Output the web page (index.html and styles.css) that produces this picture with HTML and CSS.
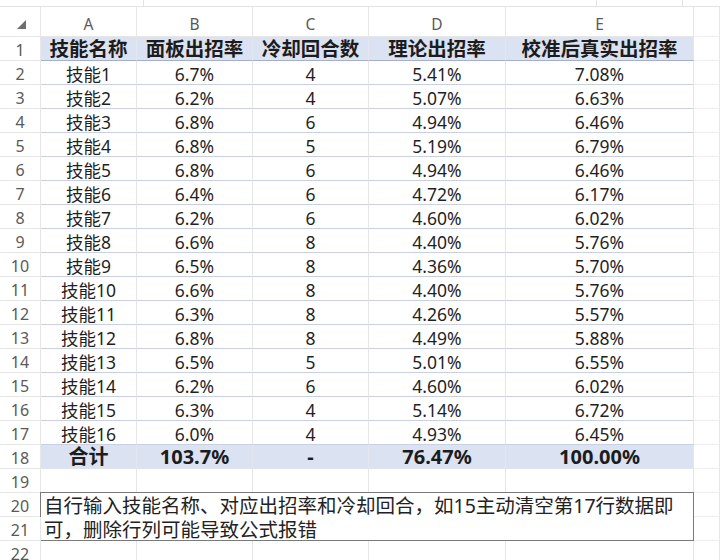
FILE: index.html
```html
<!DOCTYPE html>
<html lang="zh">
<head>
<meta charset="utf-8">
<link rel="stylesheet" href="styles.css">
</head>
<body>
<div class="topbar"><div class="tb1"></div><div class="tb2"></div><div class="tb3"></div><div class="tb4"></div></div>
<div class="sheet">
  <div class="ch corner"><span class="tri"></span></div><div class="ch">A</div><div class="ch">B</div><div class="ch">C</div><div class="ch">D</div><div class="ch">E</div><div class="ch f"></div>

  <div class="rn">1</div><div class="c hdr">技能名称</div><div class="c hdr">面板出招率</div><div class="c hdr">冷却回合数</div><div class="c hdr">理论出招率</div><div class="c hdr">校准后真实出招率</div><div class="c f"></div>
  <div class="rn">2</div><div class="c d">技能1</div><div class="c d">6.7%</div><div class="c d">4</div><div class="c d">5.41%</div><div class="c d">7.08%</div><div class="c f"></div>
  <div class="rn">3</div><div class="c d">技能2</div><div class="c d">6.2%</div><div class="c d">4</div><div class="c d">5.07%</div><div class="c d">6.63%</div><div class="c f"></div>
  <div class="rn">4</div><div class="c d">技能3</div><div class="c d">6.8%</div><div class="c d">6</div><div class="c d">4.94%</div><div class="c d">6.46%</div><div class="c f"></div>
  <div class="rn">5</div><div class="c d">技能4</div><div class="c d">6.8%</div><div class="c d">5</div><div class="c d">5.19%</div><div class="c d">6.79%</div><div class="c f"></div>
  <div class="rn">6</div><div class="c d">技能5</div><div class="c d">6.8%</div><div class="c d">6</div><div class="c d">4.94%</div><div class="c d">6.46%</div><div class="c f"></div>
  <div class="rn">7</div><div class="c d">技能6</div><div class="c d">6.4%</div><div class="c d">6</div><div class="c d">4.72%</div><div class="c d">6.17%</div><div class="c f"></div>
  <div class="rn">8</div><div class="c d">技能7</div><div class="c d">6.2%</div><div class="c d">6</div><div class="c d">4.60%</div><div class="c d">6.02%</div><div class="c f"></div>
  <div class="rn">9</div><div class="c d">技能8</div><div class="c d">6.6%</div><div class="c d">8</div><div class="c d">4.40%</div><div class="c d">5.76%</div><div class="c f"></div>
  <div class="rn">10</div><div class="c d">技能9</div><div class="c d">6.5%</div><div class="c d">8</div><div class="c d">4.36%</div><div class="c d">5.70%</div><div class="c f"></div>
  <div class="rn">11</div><div class="c d">技能10</div><div class="c d">6.6%</div><div class="c d">8</div><div class="c d">4.40%</div><div class="c d">5.76%</div><div class="c f"></div>
  <div class="rn">12</div><div class="c d">技能11</div><div class="c d">6.3%</div><div class="c d">8</div><div class="c d">4.26%</div><div class="c d">5.57%</div><div class="c f"></div>
  <div class="rn">13</div><div class="c d">技能12</div><div class="c d">6.8%</div><div class="c d">8</div><div class="c d">4.49%</div><div class="c d">5.88%</div><div class="c f"></div>
  <div class="rn">14</div><div class="c d">技能13</div><div class="c d">6.5%</div><div class="c d">5</div><div class="c d">5.01%</div><div class="c d">6.55%</div><div class="c f"></div>
  <div class="rn">15</div><div class="c d">技能14</div><div class="c d">6.2%</div><div class="c d">6</div><div class="c d">4.60%</div><div class="c d">6.02%</div><div class="c f"></div>
  <div class="rn">16</div><div class="c d">技能15</div><div class="c d">6.3%</div><div class="c d">4</div><div class="c d">5.14%</div><div class="c d">6.72%</div><div class="c f"></div>
  <div class="rn">17</div><div class="c d">技能16</div><div class="c d">6.0%</div><div class="c d">4</div><div class="c d">4.93%</div><div class="c d">6.45%</div><div class="c f"></div>
  <div class="rn">18</div><div class="c tot">合计</div><div class="c tot">103.7%</div><div class="c tot">-</div><div class="c tot">76.47%</div><div class="c tot">100.00%</div><div class="c f"></div>
  <div class="rn">19</div><div class="c"></div><div class="c"></div><div class="c"></div><div class="c"></div><div class="c"></div><div class="c f"></div>
  <div class="rn">20</div><div class="note">自行输入技能名称、对应出招率和冷却回合，如15主动清空第17行数据即可，删除行列可能导致公式报错</div><div class="c f"></div>
  <div class="rn">21</div><div class="c f"></div>
  <div class="rn">22</div><div class="c"></div><div class="c"></div><div class="c"></div><div class="c"></div><div class="c"></div><div class="c f"></div>
</div>
</body>
</html>
```
FILE: styles.css
```css
html, body {
  margin: 0;
  padding: 0;
  background: #fff;
  overflow: hidden;
  width: 720px;
  height: 560px;
}
body {
  font-family: "Noto Sans", "Noto Sans CJK SC", sans-serif;
  color: #1f1f1f;
}
.topbar {
  display: flex;
  height: 6px;
  border-bottom: 1px solid #e3e3e3;
}
.tb1 { width: 143px; border-right: 1px solid #e3e3e3; }
.tb2 { width: 452px; border-right: 1px solid #e3e3e3; }
.tb3 { width: 85px; border-right: 1px solid #e3e3e3; }
.tb4 { flex: 1; }

.sheet {
  display: grid;
  grid-template-columns: 41px 96px 116px 116px 137px 188px 26px;
  grid-template-rows: 30px repeat(22, 24px);
}
.sheet > div {
  box-sizing: border-box;
  border-right: 1px solid #e6e6e6;
  border-bottom: 1px solid #e6e6e6;
  display: flex;
  align-items: center;
  justify-content: center;
  white-space: nowrap;
  min-width: 0;
  line-height: 20px;
}
.ch {
  font-size: 15.5px;
  color: #5a5a5a;
  padding-top: 5px;
}
.tri {
  width: 0;
  height: 0;
  border-left: 9px solid transparent;
  border-bottom: 9px solid #6e6e6e;
  margin-left: 2px;
}
.rn {
  font-size: 16px;
  color: #5a5a5a;
  padding-top: 2px;
}
.c {
  font-size: 17.5px;
  color: #1f1f1f;
  padding-top: 2px;
}
.sheet > .hdr {
  background: #dbe2f1;
  font-weight: 700;
  font-size: 19.5px;
  color: #1c1c1c;
  padding-top: 1px;
  border-bottom-color: #a4afcf;
  border-right-color: #e3e6ee;
}
.sheet > .d {
  border-bottom-color: #c9d0e3;
}
.sheet > .tot {
  background: #dbe2f1;
  font-weight: 700;
  font-size: 20px;
  color: #1c1c1c;
  padding-top: 1px;
  border-bottom-color: #e0e4ee;
  border-right-color: #e3e6ee;
}
.sheet > .f {
  border-bottom-color: #eeeeee;
}
.sheet > .note {
  grid-column: 2 / span 5;
  grid-row: span 2;
  margin: -1px 0 0 -1px;
  border: 1px solid #7a7a7a;
  display: block;
  white-space: normal;
  font-size: 19.5px;
  line-height: 24px;
  padding: 1px 0 0 3px;
  color: #222;
}
```
